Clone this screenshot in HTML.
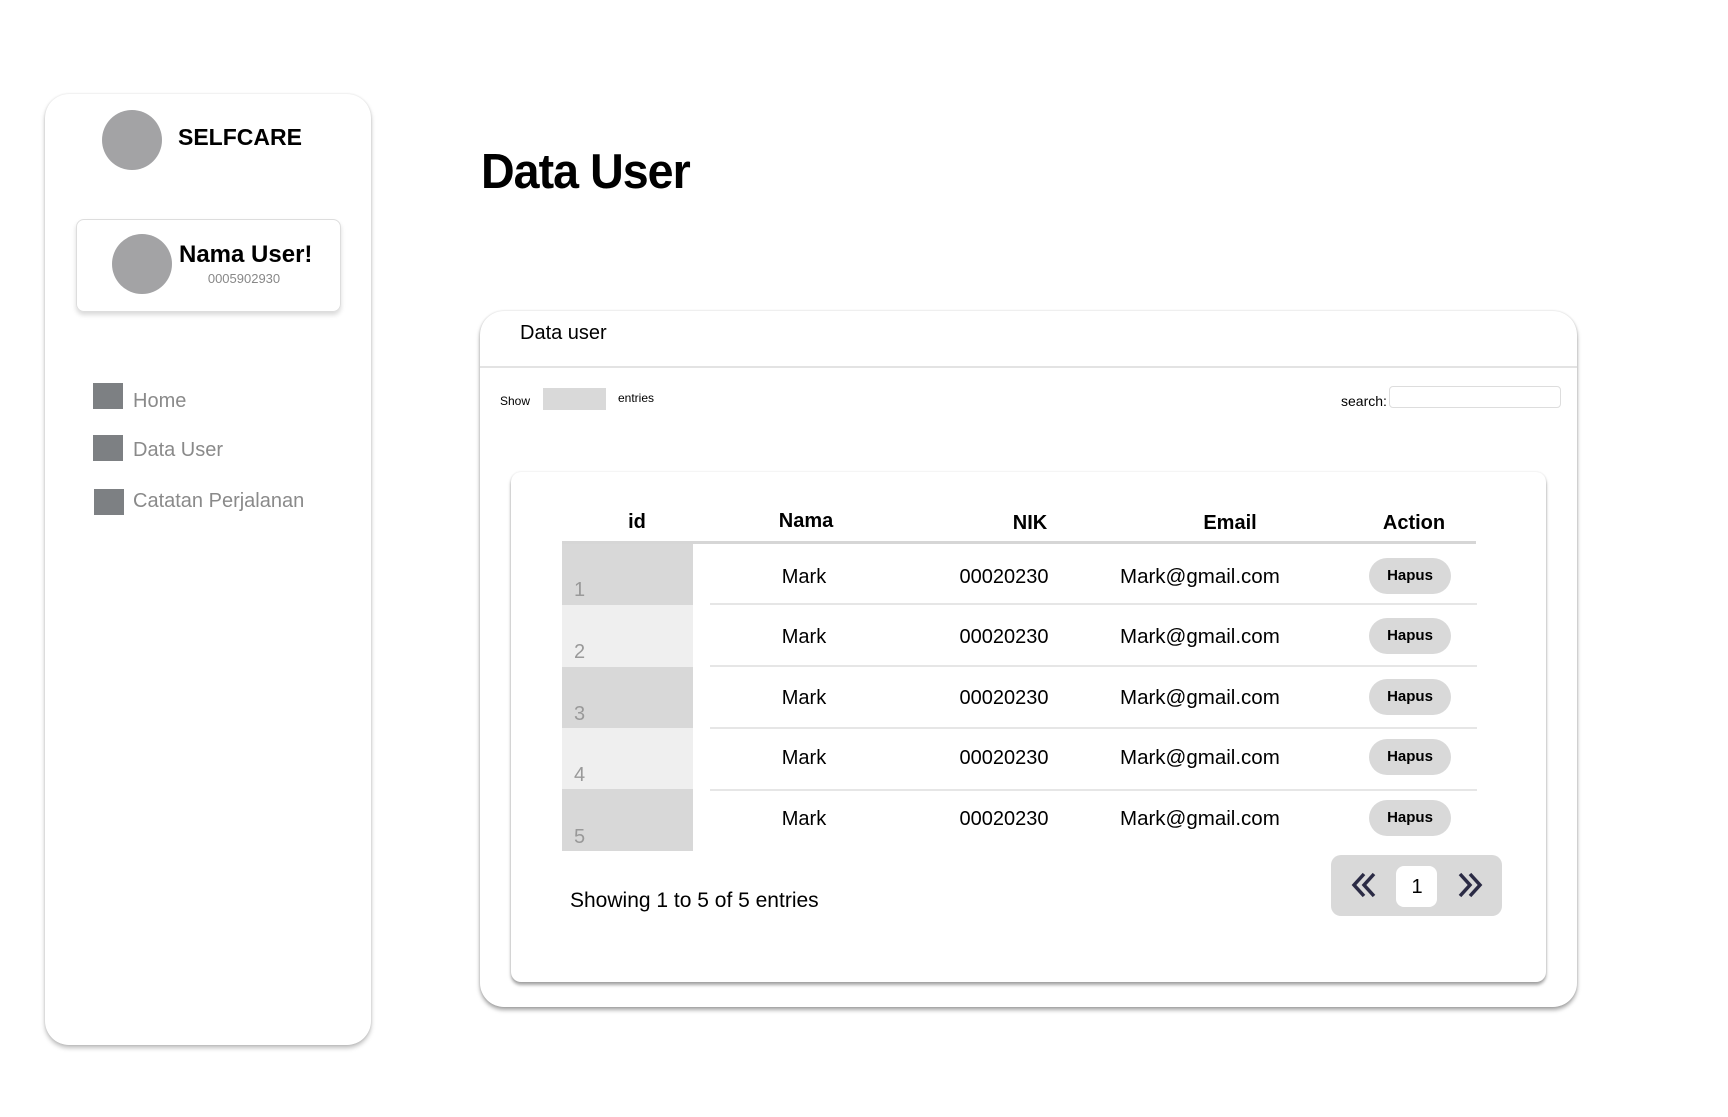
<!DOCTYPE html>
<html><head><meta charset="utf-8"><style>
*{margin:0;padding:0;box-sizing:border-box}
body{width:1728px;height:1117px;background:#fff;font-family:"Liberation Sans",sans-serif;position:relative;overflow:hidden;color:#000}
.a{position:absolute}
.t{position:absolute;white-space:nowrap;line-height:1}
.c{transform:translateX(-50%)}
.circ{position:absolute;border-radius:50%;background:#a3a3a5}
.sq{position:absolute;width:30px;height:26px;background:#7d8083}
.nav{position:absolute;font-size:20px;color:#8a8a8a;line-height:1}
.hb{position:absolute;width:82px;height:36px;border-radius:18px;background:#d9d9d9;font-size:15px;font-weight:bold;text-align:center;line-height:36px}
.rl{position:absolute;left:716px;width:767px;height:2px;background:#e6e6e6}
.em{font-size:20.5px}
</style></head><body>
<div class="a" style="left:45px;top:94px;width:326px;height:951px;border-radius:24px;background:#fff;box-shadow:0 3px 5px rgba(0,0,0,.25),0 0 2px rgba(0,0,0,.12)"></div>
<div class="circ" style="left:102px;top:110px;width:60px;height:60px"></div>
<div class="t" style="left:178px;top:126px;font-size:23px;font-weight:bold">SELFCARE</div>
<div class="a" style="left:76px;top:219px;width:265px;height:93px;border-radius:8px;border:1px solid #ddd;box-shadow:0 3px 5px rgba(0,0,0,.15)"></div>
<div class="circ" style="left:112px;top:234px;width:60px;height:60px"></div>
<div class="t" style="left:179px;top:243px;font-size:24px;font-weight:bold">Nama User!</div>
<div class="t c" style="left:244px;top:272px;font-size:13px;color:#888">0005902930</div>
<div class="sq" style="left:93px;top:383px"></div><div class="nav" style="left:133px;top:391px">Home</div>
<div class="sq" style="left:93px;top:435px"></div><div class="nav" style="left:133px;top:440px">Data User</div>
<div class="sq" style="left:94px;top:489px"></div><div class="nav" style="left:133px;top:491px">Catatan Perjalanan</div>
<div class="t" style="left:481px;top:148px;font-size:49px;font-weight:bold;letter-spacing:-1px;transform:scaleX(0.95);transform-origin:left">Data User</div>
<div class="a" style="left:480px;top:311px;width:1097px;height:696px;border-radius:24px;background:#fff;box-shadow:0 3px 4px rgba(0,0,0,.35),0 0 2px rgba(0,0,0,.15)"></div>
<div class="t" style="left:520px;top:323px;font-size:20px">Data user</div>
<div class="a" style="left:480px;top:366px;width:1097px;height:2px;background:#e3e3e3"></div>
<div class="t" style="left:500px;top:395px;font-size:12px">Show</div>
<div class="a" style="left:543px;top:388px;width:63px;height:22px;background:#d9d9d9"></div>
<div class="t" style="left:618px;top:392px;font-size:12px">entries</div>
<div class="t" style="left:1341px;top:394px;font-size:14px">search:</div>
<div class="a" style="left:1389px;top:386px;width:172px;height:22px;border:1px solid #ddd;border-radius:4px"></div>
<div class="a" style="left:511px;top:472px;width:1035px;height:510px;border-radius:10px;background:#fff;box-shadow:0 3px 3px rgba(0,0,0,.35),0 0 2px rgba(0,0,0,.12)"></div>
<div class="t c" style="left:637px;top:512px;font-size:20px;font-weight:bold">id</div>
<div class="t c" style="left:806px;top:511px;font-size:20px;font-weight:bold">Nama</div>
<div class="t c" style="left:1030px;top:513px;font-size:20px;font-weight:bold">NIK</div>
<div class="t c" style="left:1230px;top:513px;font-size:20px;font-weight:bold">Email</div>
<div class="t c" style="left:1414px;top:513px;font-size:20px;font-weight:bold">Action</div>
<div class="a" style="left:562px;top:541px;width:914px;height:3px;background:#d6d6d6"></div>
<div class="a" style="left:562px;top:544px;width:131px;height:61px;background:#d8d8d8"></div>
<div class="a" style="left:562px;top:605px;width:131px;height:62px;background:#efefef"></div>
<div class="a" style="left:562px;top:667px;width:131px;height:61px;background:#d8d8d8"></div>
<div class="a" style="left:562px;top:728px;width:131px;height:61px;background:#efefef"></div>
<div class="a" style="left:562px;top:789px;width:131px;height:62px;background:#d8d8d8"></div>
<div class="t" style="left:574px;top:580px;font-size:20px;color:#999">1</div>
<div class="t" style="left:574px;top:642px;font-size:20px;color:#999">2</div>
<div class="t" style="left:574px;top:704px;font-size:20px;color:#999">3</div>
<div class="t" style="left:574px;top:765px;font-size:20px;color:#999">4</div>
<div class="t" style="left:574px;top:827px;font-size:20px;color:#999">5</div>
<div class="rl" style="top:603px;left:710px"></div><div class="rl" style="top:665px;left:710px"></div><div class="rl" style="top:727px;left:710px"></div><div class="rl" style="top:789px;left:710px"></div>
<div class="t c" style="left:804px;top:567px;font-size:20px">Mark</div><div class="t c" style="left:1004px;top:567px;font-size:20px">00020230</div><div class="t em" style="left:1120px;top:567px">Mark@gmail.com</div><div class="hb" style="left:1369px;top:558px">Hapus</div>
<div class="t c" style="left:804px;top:627px;font-size:20px">Mark</div><div class="t c" style="left:1004px;top:627px;font-size:20px">00020230</div><div class="t em" style="left:1120px;top:627px">Mark@gmail.com</div><div class="hb" style="left:1369px;top:618px">Hapus</div>
<div class="t c" style="left:804px;top:688px;font-size:20px">Mark</div><div class="t c" style="left:1004px;top:688px;font-size:20px">00020230</div><div class="t em" style="left:1120px;top:688px">Mark@gmail.com</div><div class="hb" style="left:1369px;top:679px">Hapus</div>
<div class="t c" style="left:804px;top:748px;font-size:20px">Mark</div><div class="t c" style="left:1004px;top:748px;font-size:20px">00020230</div><div class="t em" style="left:1120px;top:748px">Mark@gmail.com</div><div class="hb" style="left:1369px;top:739px">Hapus</div>
<div class="t c" style="left:804px;top:809px;font-size:20px">Mark</div><div class="t c" style="left:1004px;top:809px;font-size:20px">00020230</div><div class="t em" style="left:1120px;top:809px">Mark@gmail.com</div><div class="hb" style="left:1369px;top:800px">Hapus</div>
<div class="t" style="left:570px;top:890px;font-size:21px">Showing 1 to 5 of 5 entries</div>
<div class="a" style="left:1331px;top:855px;width:171px;height:61px;border-radius:10px;background:#d9d9d9"></div>
<div class="a" style="left:1396px;top:866px;width:41px;height:41px;border-radius:8px;background:#fff"></div>
<div class="t c" style="left:1417px;top:877px;font-size:20px">1</div>
<svg class="a" style="left:1350px;top:871px" width="30" height="30" viewBox="0 0 30 30" fill="none" stroke="#2b2b45" stroke-width="3.5"><path d="M14 3 4 14 14 25M24 3 14 14 24 25"/></svg>
<svg class="a" style="left:1454px;top:871px" width="30" height="30" viewBox="0 0 30 30" fill="none" stroke="#2b2b45" stroke-width="3.5"><path d="M6 3 16 14 6 25M16 3 26 14 16 25"/></svg>
</body></html>
